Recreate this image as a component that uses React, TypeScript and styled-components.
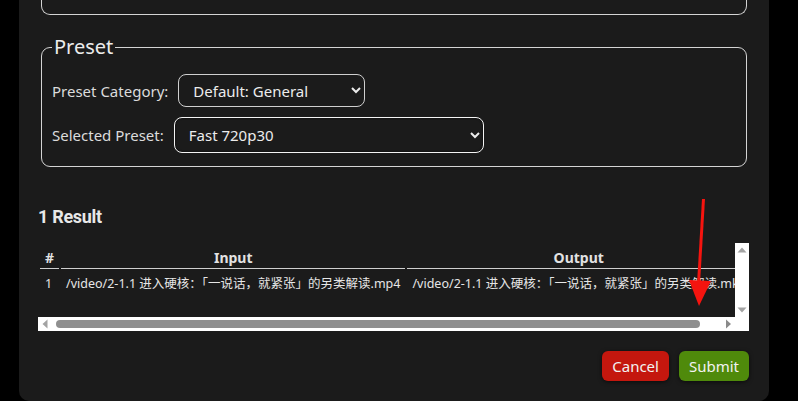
import styled, { createGlobalStyle } from 'styled-components'

const GlobalStyle = createGlobalStyle`
  html, body {
    margin: 0;
    padding: 0;
    background: #000;
    color-scheme: dark;
  }
  body {
    font-family: "Noto Sans", "Noto Sans CJK SC", sans-serif;
    color: #e6e6e6;
    overflow: hidden;
  }
`

const Page = styled.div`
  position: relative;
  width: 798px;
  height: 401px;
`

const Panel = styled.div`
  box-sizing: border-box;
  width: 750px;
  height: 401px;
  margin-left: 19px;
  padding: 0 20px 0 19px;
  background: #1b1b1b;
  border-radius: 0 0 10px 10px;
  display: flex;
  flex-direction: column;
`

const PrevFieldset = styled.div`
  height: 14px;
  margin: 0 2px 0 3px;
  border: 1px solid #d4d4d4;
  border-top: none;
  border-radius: 0 0 9px 9px;
`

const Fieldset = styled.fieldset`
  margin: 19px 2px 0 3px;
  padding: 0 10px 13px;
  border: 1px solid #d4d4d4;
  border-radius: 9px;
  display: flex;
  flex-direction: column;
  gap: 10px;
`

const Legend = styled.legend`
  padding: 0 2px;
  font-size: 20px;
  line-height: 26px;
  color: #ececec;
`

const Row = styled.div<{ $top?: number }>`
  display: flex;
  align-items: center;
  gap: 10px;
  margin-top: ${(p) => p.$top ?? 0}px;
`

const Label = styled.label`
  font-size: 15px;
  color: #dcdcdc;
`

const Select = styled.select<{ $w: number; $h: number; $focus?: boolean }>`
  box-sizing: border-box;
  width: ${(p) => p.$w}px;
  height: ${(p) => p.$h}px;
  padding: 0 6px 0 10px;
  font-family: "Noto Sans", sans-serif;
  font-size: 15px;
  color: #ececec;
  background: #1b1b1b;
  border: 1px solid ${(p) => (p.$focus ? '#f4f4f4' : '#cfcfcf')};
  border-radius: 8px;
  box-shadow: ${(p) => (p.$focus ? 'inset 0 0 2px rgba(0,0,0,0.9)' : 'none')};
  outline: none;
`

const Heading = styled.h3`
  margin: 38px 0 0;
  font-family: Roboto, sans-serif;
  font-weight: 700;
  font-size: 18px;
  line-height: 24px;
  letter-spacing: -0.3px;
  color: #e8e8e8;
`

/* table box: viewport + drawn scrollbars */
const TableBox = styled.div`
  margin-top: 14px;
  display: grid;
  grid-template-columns: 1fr 14px;
  grid-template-rows: 74px 14px;
  height: 88px;
`

const Viewport = styled.div`
  overflow: hidden;
`

const VBar = styled.div`
  background: #fff;
  display: flex;
  flex-direction: column;
  justify-content: space-between;
`

const HBar = styled.div`
  background: #fff;
  display: flex;
  align-items: center;
`

const Corner = styled.div`
  background: #fff;
`

const Track = styled.div`
  flex: 1;
  display: flex;
  align-items: center;
`

const Thumb = styled.div`
  margin-left: 4px;
  width: 644px;
  height: 8px;
  border-radius: 4px;
  background: #8f8f8f;
`

const ArrowBtn = styled.svg`
  display: block;
  flex: none;
  width: 14px;
  height: 14px;
`

const arrowPoints = {
  left: '9.5,2.5 4.5,7 9.5,11.5',
  right: '5,2.5 10,7 5,11.5',
  up: '2.5,9.5 7,4.5 11.5,9.5',
  down: '2.5,4.5 7,9.5 11.5,4.5',
}

const Arrow = ({ dir, color }: { dir: keyof typeof arrowPoints; color: string }) => (
  <ArrowBtn viewBox="0 0 14 14">
    <polygon points={arrowPoints[dir]} fill={color} />
  </ArrowBtn>
)

const Table = styled.table`
  border-spacing: 2px;
  white-space: nowrap;
`

const Th = styled.th`
  padding: 3px 5px 0;
  font-size: 14px;
  line-height: 20px;
  font-weight: 700;
  color: #e2e2e2;
  border-bottom: 1px solid #cfcfcf;
`

const Td = styled.td`
  padding: 5px 5px 4px;
  font-size: 12.5px;
  line-height: 16px;
  color: #e6e6e6;
`

const Actions = styled.div`
  margin-top: 20px;
  display: flex;
  justify-content: flex-end;
  gap: 10px;
`

const Button = styled.button<{ $bg: string }>`
  height: 30px;
  padding: 0 10px;
  border: none;
  border-radius: 6px;
  background: ${(p) => p.$bg};
  color: #f2f2f2;
  font-family: "Noto Sans", sans-serif;
  font-size: 15px;
  box-shadow: 0 1px 4px rgba(0, 0, 0, 0.6);
`

const Annotation = styled.svg`
  position: absolute;
  left: 0;
  top: 0;
  pointer-events: none;
`

const fileName = '/video/2-1.1 进入硬核：「一说话，就紧张」的另类解读'

export default function App() {
  return (
    <Page>
      <GlobalStyle />
      <Panel>
        <PrevFieldset />
        <Fieldset>
          <Legend>Preset</Legend>
          <Row $top={14}>
            <Label>Preset Category:</Label>
            <Select $w={187} $h={33} defaultValue="general">
              <option value="general">Default: General</option>
            </Select>
          </Row>
          <Row>
            <Label>Selected Preset:</Label>
            <Select $w={310} $h={36} $focus defaultValue="fast720">
              <option value="fast720">Fast 720p30</option>
            </Select>
          </Row>
        </Fieldset>
        <Heading>1 Result</Heading>
        <TableBox>
          <Viewport>
            <Table>
              <thead>
                <tr>
                  <Th>#</Th>
                  <Th>Input</Th>
                  <Th>Output</Th>
                </tr>
              </thead>
              <tbody>
                <tr>
                  <Td>1</Td>
                  <Td>{fileName}.mp4</Td>
                  <Td>{fileName}.mkv</Td>
                </tr>
              </tbody>
            </Table>
          </Viewport>
          <VBar>
            <Arrow dir="up" color="#a3a3a3" />
            <Arrow dir="down" color="#a3a3a3" />
          </VBar>
          <HBar>
            <Arrow dir="left" color="#a3a3a3" />
            <Track>
              <Thumb />
            </Track>
            <Arrow dir="right" color="#8a8a8a" />
          </HBar>
          <Corner />
        </TableBox>
        <Actions>
          <Button $bg="#c4170e">Cancel</Button>
          <Button $bg="#4f8a0b">Submit</Button>
        </Actions>
      </Panel>
      <Annotation width="798" height="401" viewBox="0 0 798 401">
        <path d="M702 199 L705 199 L700 284 L697 284 Z" fill="#f5140f" />
        <path d="M689 280 L711 281 L699 306 Z" fill="#f5140f" />
      </Annotation>
    </Page>
  )
}
